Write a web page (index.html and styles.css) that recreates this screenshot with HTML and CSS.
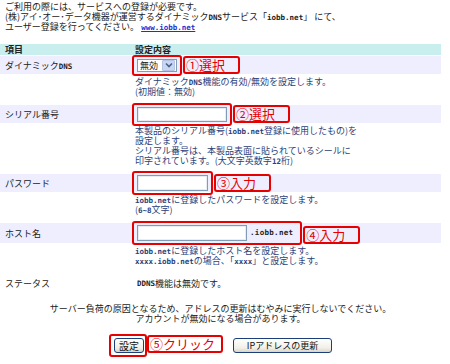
FILE: index.html
```html
<!DOCTYPE html>
<html lang="ja">
<head>
    <meta charset="UTF-8">
    <title>ダイナミックDNS</title>
    <link rel="stylesheet" href="styles.css">
</head>
<body>
    <div class="intro">
        <p>ご利用の際には、サービスへの登録が必要です。</p>
        <p>(株)アイ･オー･データ機器が運営するダイナミック<span class="en">DNS</span>サービス「<span class="en">iobb.net</span>」 にて、</p>
        <p>ユーザー登録を行ってください。 <a href="#" class="link en">www.iobb.net</a></p>
    </div>

    <div class="settings">
        <div class="head">
            <div class="key">項目</div>
            <div class="val">設定内容</div>
        </div>

        <div class="row">
            <div class="key">ダイナミック<span class="en">DNS</span></div>
            <div class="val">
                <span class="mark">
                    <span class="select">
                        <span class="select-text">無効</span>
                        <span class="select-arrow">
                            <svg width="8" height="6" viewBox="0 0 8 6"><path d="M1 1.5 L4 4.5 L7 1.5" fill="none" stroke="#4d6185" stroke-width="1.6"/></svg>
                        </span>
                    </span>
                </span>
                <span class="tag">①選択</span>
            </div>
        </div>
        <p class="desc">ダイナミック<span class="en">DNS</span>機能の有効/無効を設定します。<br>(初期値：無効)</p>

        <div class="row">
            <div class="key">シリアル番号</div>
            <div class="val">
                <span class="mark"><input type="text" class="field field-serial"></span>
                <span class="tag">②選択</span>
            </div>
        </div>
        <p class="desc">本製品のシリアル番号(<span class="en">iobb.net</span>登録に使用したもの)を<br>設定します。<br>シリアル番号は、本製品表面に貼られているシールに<br>印字されています。(大文字英数字<span class="en">12</span>桁)</p>

        <div class="row">
            <div class="key">パスワード</div>
            <div class="val">
                <span class="mark"><input type="password" class="field field-pass"></span>
                <span class="tag">③入力</span>
            </div>
        </div>
        <p class="desc"><span class="en">iobb.net</span>に登録したパスワードを設定します。<br>(<span class="en">6~8</span>文字)</p>

        <div class="row row-host">
            <div class="key">ホスト名</div>
            <div class="val">
                <span class="mark"><input type="text" class="field field-host"><span class="domain en">.iobb.net</span></span>
                <span class="tag tag-host">④入力</span>
            </div>
        </div>
        <p class="desc"><span class="en">iobb.net</span>に登録したホスト名を設定します。<br><span class="en">xxxx.iobb.net</span>の場合、「<span class="en">xxxx</span>」と設定します。</p>

        <div class="status">
            <div class="key">ステータス</div>
            <div class="val"><span class="en">DDNS</span>機能は無効です。</div>
        </div>
    </div>

    <p class="notice">サーバー負荷の原因となるため、アドレスの更新はむやみに実行しないでください。<br>アカウントが無効になる場合があります。</p>

    <div class="actions">
        <span class="mark mark-btn"><button type="button" class="btn btn-set">設定</button></span>
        <span class="tag tag-click">⑤クリック</span>
        <button type="button" class="btn btn-ip">IPアドレスの更新</button>
    </div>
</body>
</html>
```

FILE: styles.css
```css
body {
    margin: 0;
    padding: 2px 0 0;
    font-family: "Noto Sans CJK JP", sans-serif;
    font-size: 9px;
    color: #222;
    background-color: white;
    width: 441px;
}
/* half-width latin, drawn as a small fixed-pitch face */
.en {
    font-family: "DejaVu Sans Mono", monospace;
    font-size: 7.5px;
    font-weight: 700;
    line-height: 1;
}
.intro {
    padding-left: 5px;
}
.intro p {
    margin: 0;
    line-height: 10px;
    white-space: nowrap;
}
.link {
    color: #1f2fd0;
    text-decoration: underline;
}
.settings {
    margin-top: 12px;
}
.head {
    display: flex;
    height: 11px;
    line-height: 11px;
    background-color: #c9eeee;
    font-weight: 700;
    margin-bottom: 1px;
}
.key {
    width: 132px;
    flex-shrink: 0;
    padding-left: 5px;
    box-sizing: border-box;
}
.head .val {
    padding-left: 3px;
}
.row {
    display: flex;
    align-items: center;
    height: 18px;
    background-color: #eeeeff;
}
.row-host {
    height: 20px;
}
.val {
    display: flex;
    align-items: center;
}
/* red callout round the control */
.mark {
    display: inline-flex;
    align-items: center;
    border: 2px solid #e60000;
    border-radius: 3px;
    padding: 2px 3px;
    margin: -3px 0;
}
.tag {
    display: inline-block;
    border: 2px solid #e60000;
    border-radius: 3px;
    color: #e60000;
    font-size: 13px;
    line-height: 14px;
    padding: 0 13px 0 1px;
    margin-left: 1px;
    white-space: nowrap;
}
.tag-host {
    margin-top: 4px;
}
.select {
    display: inline-flex;
    align-items: center;
    width: 40px;
    height: 13px;
    box-sizing: border-box;
    border: 1px solid #7f9db9;
    background-color: white;
}
.select-text {
    flex: 1;
    padding-left: 2px;
    line-height: 11px;
}
.select-arrow {
    display: flex;
    align-items: center;
    justify-content: center;
    width: 11px;
    height: 9px;
    margin-right: 1px;
    background-color: #c8d6f4;
    border: 1px solid #b4c4e6;
    border-radius: 1px;
}
.field {
    height: 15px;
    box-sizing: border-box;
    margin: 0;
    padding: 0;
    border: 1px solid #7f9db9;
    box-shadow: inset 0 0 0 1px #e8edf3;
    background-color: white;
}
.field-serial {
    width: 90px;
}
.field-pass {
    width: 71px;
    height: 16px;
}
.field-host {
    width: 110px;
    height: 16px;
}
.domain {
    margin: 0 4px 0 3px;
    letter-spacing: 0.3px;
}
.desc {
    margin: 0;
    padding: 3px 0 8px 135px;
    line-height: 10px;
    color: #2b3f7a;
    white-space: nowrap;
}
.status {
    display: flex;
    height: 14px;
    line-height: 14px;
    margin-top: 3px;
}
.status .val {
    padding-left: 5px;
}
.notice {
    margin: 13px 0 0;
    text-align: center;
    line-height: 10px;
}
.actions {
    display: flex;
    align-items: center;
    justify-content: center;
    margin-top: 10px;
}
.mark-btn {
    margin: 0;
    padding: 2px 1px 2px 3px;
}
.tag-click {
    margin-left: 0;
    padding-right: 6px;
    margin-top: -4px;
}
.btn {
    height: 15px;
    box-sizing: border-box;
    padding: 0;
    border: 1px solid #1c3f7a;
    border-radius: 3px;
    background: linear-gradient(#ffffff, #f1efe6 70%, #d9d5c6);
    font-family: "Noto Sans CJK JP", sans-serif;
    font-size: 10px;
    line-height: 12px;
    color: #111;
}
.btn-set {
    width: 30px;
}
.btn-ip {
    width: 99px;
    margin-left: 10px;
    font-size: 9px;
}
```
